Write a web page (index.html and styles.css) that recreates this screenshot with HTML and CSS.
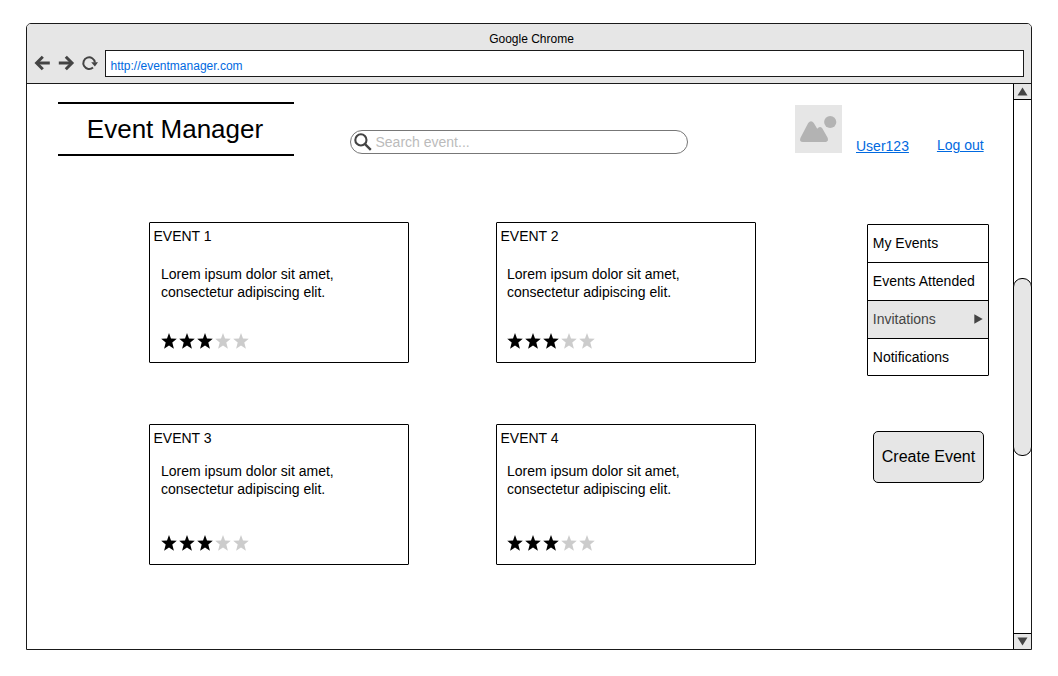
FILE: index.html
```html
<!DOCTYPE html>
<html lang="en">
<head>
<meta charset="utf-8">
<title>Event Manager</title>
<link rel="stylesheet" href="styles.css">
</head>
<body>
<svg class="defs" width="0" height="0">
  <symbol id="star" viewBox="0 0 16 16"><path d="M8 0L10 5.5L15.8 5.8L11.3 9.5L12.9 15.8L8 12.4L3.1 15.8L4.7 9.5L.2 5.8L6 5.5Z"/></symbol>
  <symbol id="stars" viewBox="0 0 88 16">
    <use href="#star" x="0" width="16" height="16"/><use href="#star" x="18" width="16" height="16"/><use href="#star" x="36" width="16" height="16"/>
    <g fill="#ccc"><use href="#star" x="54" width="16" height="16"/><use href="#star" x="72" width="16" height="16"/></g>
  </symbol>
</svg>
<div class="window">
  <div class="chrome">
    <div class="window-title">Google Chrome</div>
    <div class="toolbar">
      <svg class="nav" width="70" height="20" viewBox="0 0 70 20" fill="none" stroke="#444" stroke-width="3">
        <path d="M16.8 10H4"/><path d="M9.8 3.8L3.6 10L9.8 16.2"/>
        <path d="M25.8 10H39"/><path d="M32.8 3.8L39 10L32.8 16.2"/>
        <path d="M60 14.5A5.8 5.8 0 1 1 61.9 9.5" stroke-width="2"/>
        <path d="M58.2 9.2H65L61.9 13.6Z" fill="#444" stroke="none"/>
      </svg>
      <div class="address">http://eventmanager.com</div>
    </div>
  </div>
  <div class="viewport">
    <div class="page">
      <header class="header">
        <h1 class="brand">Event Manager</h1>
        <div class="search">
          <svg width="18" height="18" viewBox="0 0 18 18" fill="none" stroke="#444"><circle cx="6.9" cy="6.9" r="5.6" stroke-width="2.1"/><path d="M10.8 10.8L16.8 16.8" stroke-width="2.4"/></svg>
          <span>Search event...</span>
        </div>
        <svg class="avatar" width="47" height="48" viewBox="0 0 47 48"><path fill="#e6e6e6" d="M0 0H47V48H0Z"/><g fill="#b3b3b3"><circle cx="35.2" cy="17" r="6.1"/><path d="M5.4 33L13.2 18Q16 14.5 18.8 18L22.2 23.7Q24.8 20.5 27.4 23.5L32.5 32.5Q34 36 31 37H8Q4 37 5.4 33Z"/></g></svg>
        <a class="link user" href="#">User123</a>
        <a class="link logout" href="#">Log out</a>
      </header>
      <div class="content">
        <main class="events">
          <article class="card"><h2>EVENT 1</h2><p>Lorem ipsum dolor sit amet,<br>consectetur adipiscing elit.</p><svg class="rating" width="88" height="16"><use href="#stars"/></svg></article>
          <article class="card right"><h2>EVENT 2</h2><p>Lorem ipsum dolor sit amet,<br>consectetur adipiscing elit.</p><svg class="rating" width="88" height="16"><use href="#stars"/></svg></article>
          <article class="card tight"><h2>EVENT 3</h2><p>Lorem ipsum dolor sit amet,<br>consectetur adipiscing elit.</p><svg class="rating" width="88" height="16"><use href="#stars"/></svg></article>
          <article class="card right tight"><h2>EVENT 4</h2><p>Lorem ipsum dolor sit amet,<br>consectetur adipiscing elit.</p><svg class="rating" width="88" height="16"><use href="#stars"/></svg></article>
        </main>
        <aside class="sidebar">
          <nav class="menu">
            <div class="item">My Events</div>
            <div class="item">Events Attended</div>
            <div class="item selected">Invitations<svg width="9" height="10" viewBox="0 0 9 10"><path fill="#444" d="M.3 .3V9.7L8.7 5Z"/></svg></div>
            <div class="item">Notifications</div>
          </nav>
          <button class="create">Create Event</button>
        </aside>
      </div>
    </div>
    <div class="scrollbar">
      <div class="step up"><svg width="11" height="9" viewBox="0 0 11 9"><path fill="#444" d="M5.5 .5L10.5 8.5H.5Z"/></svg></div>
      <div class="thumb"></div>
      <div class="step down"><svg width="11" height="9" viewBox="0 0 11 9"><path fill="#444" d="M.5 .5H10.5L5.5 8.5Z"/></svg></div>
    </div>
  </div>
</div>
</body>
</html>
```
FILE: styles.css
```css
* { box-sizing: border-box; }
body {
  margin: 0;
  padding: 23px 26px;
  background: #fff;
  color: #000;
  font: 14px/18px "Liberation Sans", Arial, sans-serif;
}
svg { display: block; flex: none; }
.defs { position: absolute; }
h1, h2, p { margin: 0; font-weight: normal; font-size: inherit; }

.window {
  display: flex;
  flex-direction: column;
  width: 1006px;
  height: 627px;
  border: 1px solid #1a1a1a;
  border-radius: 5px 5px 0 0;
}
.chrome {
  height: 60px;
  background: #e6e6e6;
  border-bottom: 1px solid #1a1a1a;
  border-radius: 4px 4px 0 0;
}
.window-title {
  height: 26px;
  padding: 7px 0 0 5px;
  font-size: 12px;
  line-height: 16px;
  text-align: center;
}
.toolbar { display: flex; padding: 0 7px 0 6px; }
.nav { margin-top: 3px; }
.address {
  flex: 1;
  height: 27px;
  margin-left: 2px;
  padding: 7px 0 0 4.5px;
  border: 1px solid #1a1a1a;
  background: #fff;
  color: #0069e0;
  font-size: 12px;
  line-height: 16px;
}

.viewport { display: flex; flex: 1; min-height: 0; }
.page { flex: 1; padding: 18px 24px 0 31px; }
.header { display: flex; align-items: flex-start; height: 54px; }
.brand {
  width: 236px;
  height: 54px;
  padding-right: 2px;
  border: solid #000;
  border-width: 2px 0;
  font-size: 26px;
  line-height: 50px;
  text-align: center;
}
.search {
  display: flex;
  width: 338px;
  height: 24px;
  margin: 28px 107px 0 56px;
  padding: 2px 3px;
  border: 1px solid #777;
  border-radius: 12px;
  color: #bbb;
}
.search span { margin-left: 3.5px; }
.avatar { margin-top: 3px; }
.link { color: #0069e0; }
.user { margin: 35px 28px 0 14px; }
.logout { margin-top: 34px; }

.content { display: flex; padding: 66px 0 0 91px; }
.events {
  display: grid;
  grid-template-columns: 260px 260px;
  grid-auto-rows: 141px;
  gap: 61px 87px;
  margin-right: 111px;
}
.card {
  display: flex;
  flex-direction: column;
  padding: 4px 0 13px 3.5px;
  border: 1px solid #000;
  border-radius: 1px;
}
.card p { margin: 20px 0 0 7.5px; }
.card.right p { margin-left: 6.5px; }
.card.tight p { margin-top: 15px; }
.rating { margin: auto 0 0 7.5px; }
.right .rating { margin-left: 6.5px; }

.sidebar { padding-top: 2px; }
.menu {
  width: 122px;
  height: 152px;
  border: 1px solid #000;
  border-radius: 1px;
}
.item {
  display: flex;
  align-items: center;
  justify-content: space-between;
  height: 38px;
  padding: 0 5px 1px 4.8px;
  border-bottom: 1px solid #000;
}
.item:last-child { height: 36px; padding-bottom: 0; border: 0; }
.selected { background: #e6e6e6; color: #444; }
.create {
  display: block;
  width: 111px;
  height: 52px;
  margin: 55px 0 0 6px;
  padding: 0;
  border: 1px solid #000;
  border-radius: 5px;
  background: #e6e6e6;
  color: #000;
  font: 16px/20px "Liberation Sans", Arial, sans-serif;
}

.scrollbar {
  display: flex;
  flex-direction: column;
  width: 18px;
  border-left: 1px solid #000;
}
.step {
  display: flex;
  align-items: center;
  justify-content: center;
  height: 16px;
  background: #e6e6e6;
}
.up { border-bottom: 1px solid #000; }
.down { margin-top: auto; border-top: 1px solid #000; }
.thumb {
  height: 178px;
  margin: 178px -1px 0;
  border: 1px solid #000;
  border-radius: 9px;
  background: #e6e6e6;
}
```
